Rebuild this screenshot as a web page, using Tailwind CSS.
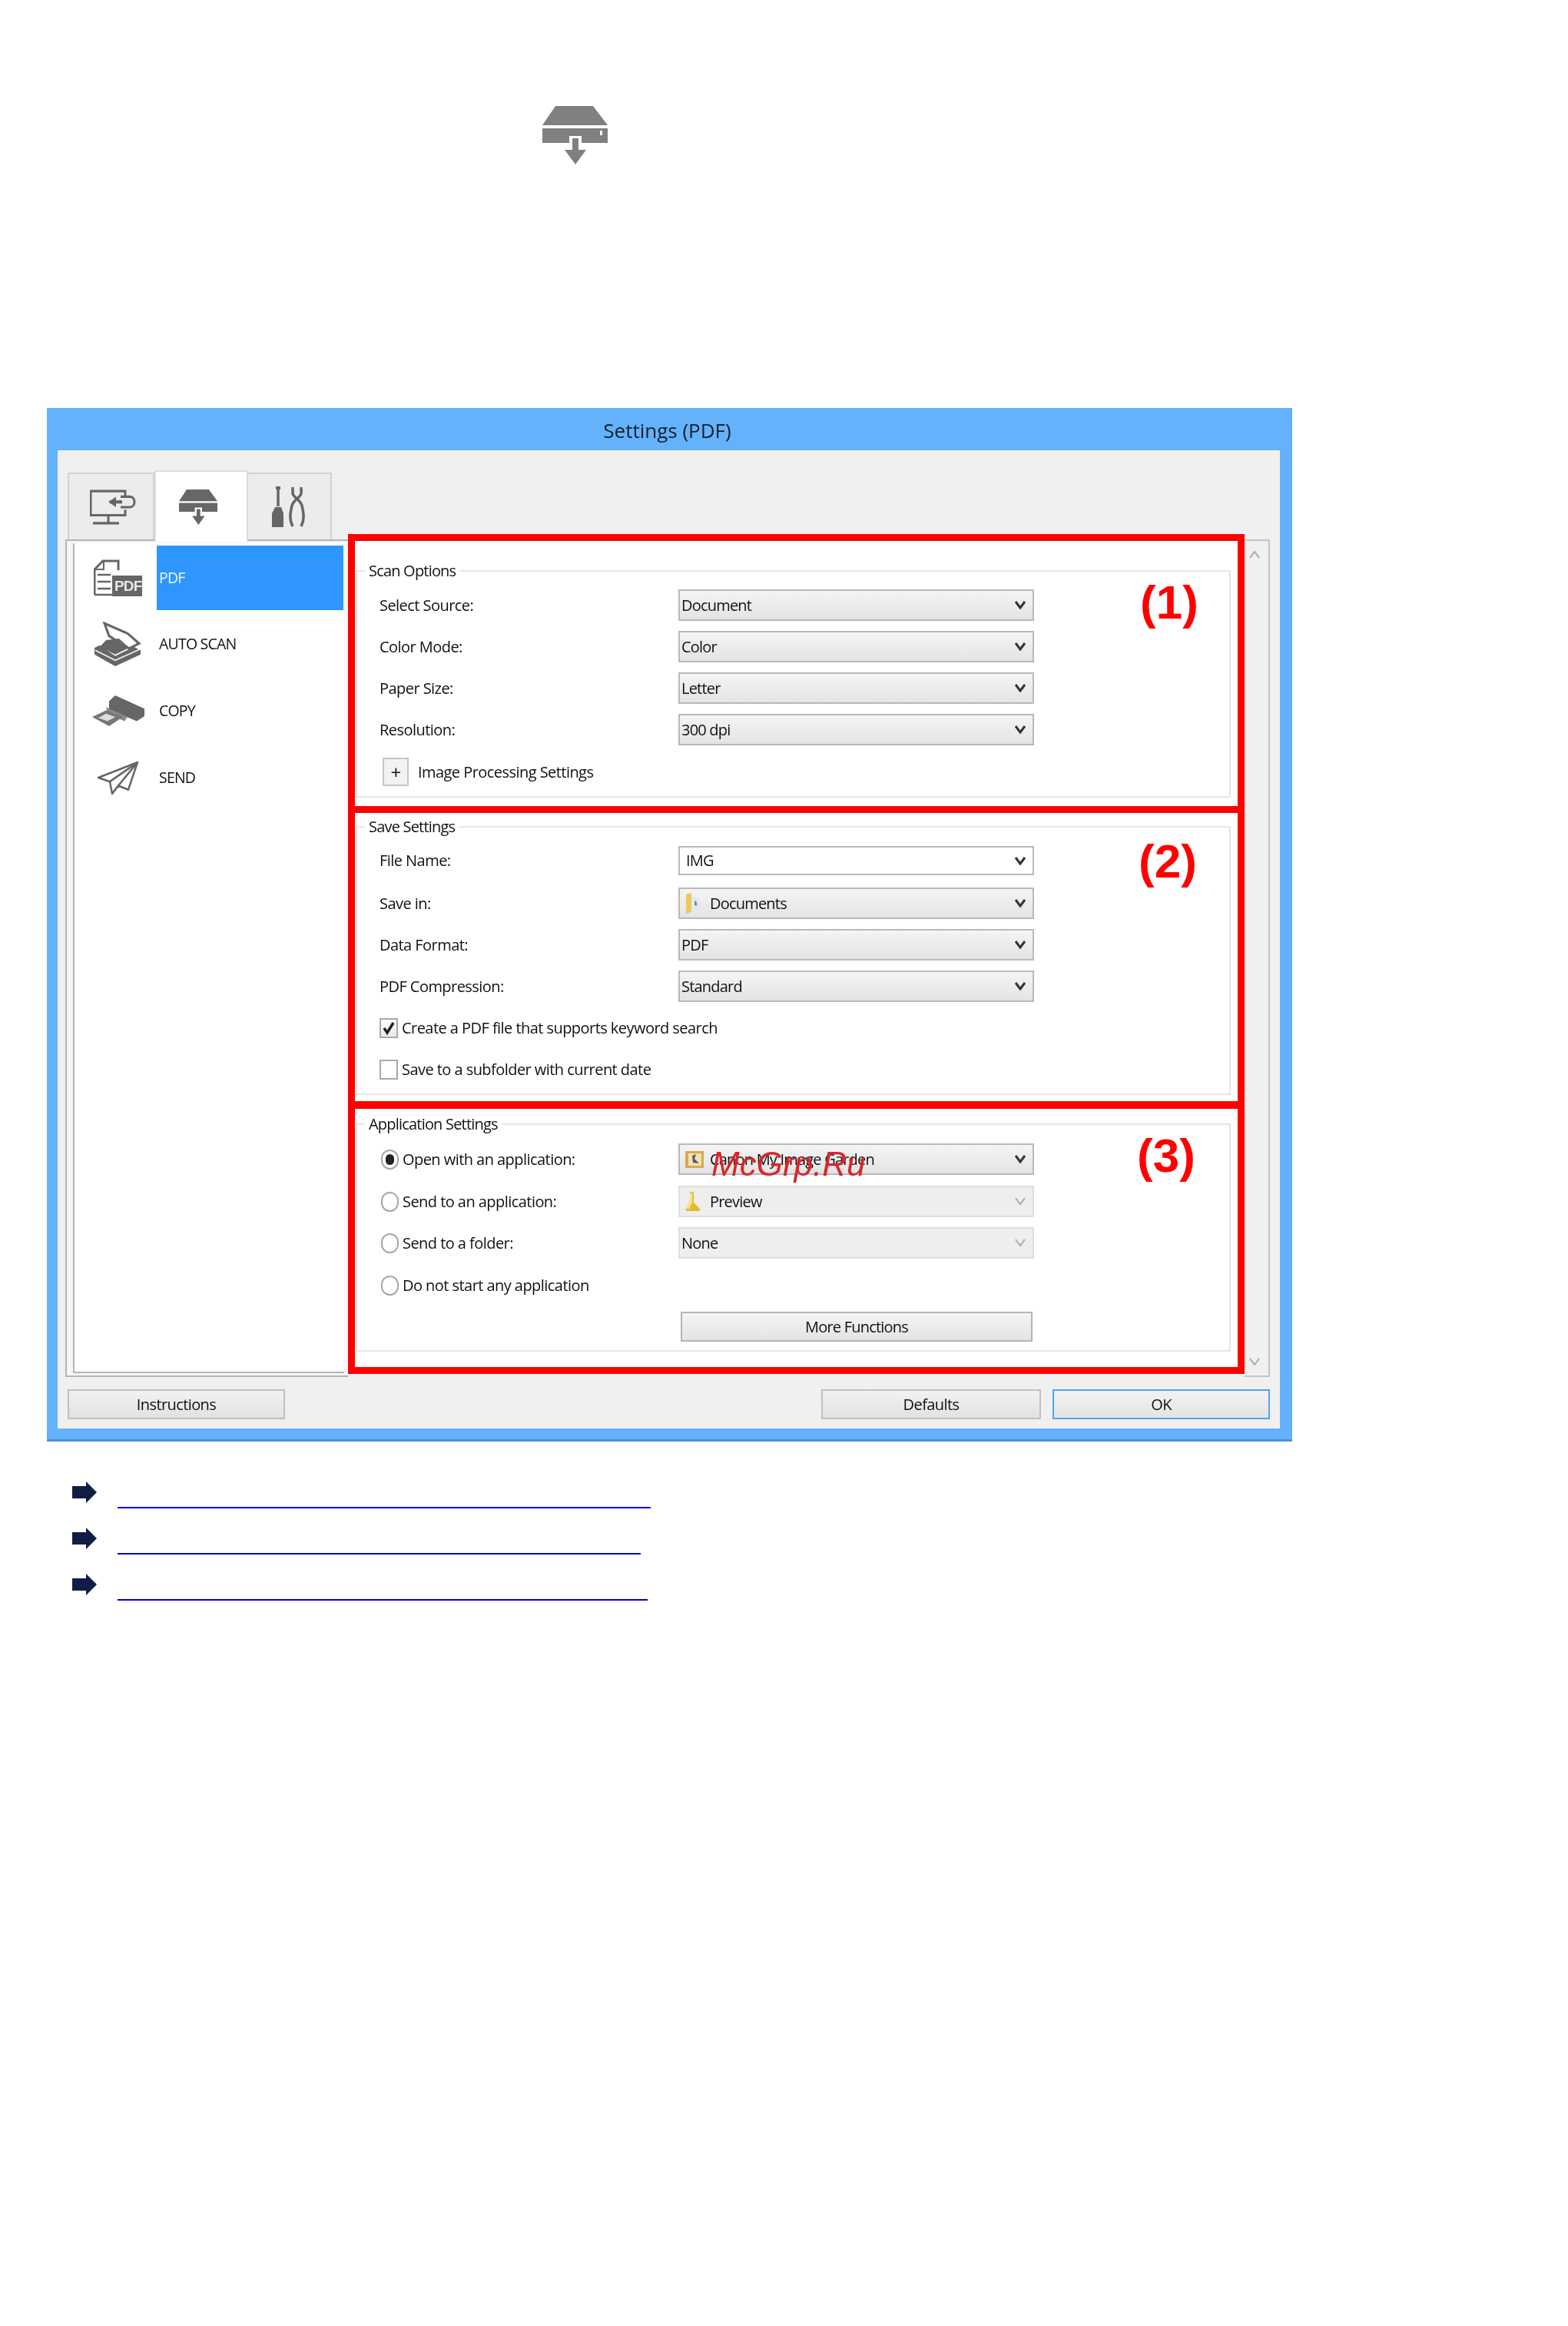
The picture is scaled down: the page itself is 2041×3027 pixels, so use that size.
<!DOCTYPE html>
<html lang="en">
<head>
  <meta charset="UTF-8">
  <title>Settings (PDF)</title>
  <script src="https://cdn.jsdelivr.net/npm/@tailwindcss/browser@4"></script>
</head>
<body class="bg-white font-['Open_Sans',sans-serif] text-[#111] min-h-[3027px]">

  <!-- Scan tab icon above the window -->
  <div class="pt-[138px] pl-[706px]">
    <svg class="block blur-[0.6px]" width="85" height="76" viewBox="0 0 85 76" fill="#808080">
      <path d="M17 0H66L85 25H0Z"/>
      <path d="M0 29H85V48H51V39H35V48H0Z"/>
      <path d="M39 42H47V57H57L43 76L29 57H39Z"/>
      <rect x="75" y="32" width="3" height="6" fill="#fff"/>
    </svg>
  </div>

  <!-- Settings window -->
  <div class="mt-[317px] ml-[61px] w-[1621px] h-[1345px] flex flex-col bg-[#64b2fc] border-b-[3px] border-[#4e93d2] blur-[0.7px]">
    <div class="h-[55px] shrink-0 flex items-center justify-center pt-[3px] pr-[6px] text-[26px] tracking-[0px] text-[#16202c]">Settings (PDF)</div>

    <div class="ml-[14px] w-[1591px] h-[1273px] shrink-0 bg-[#f0f0f0]">
      <!-- Tabs -->
      <div class="pt-[26px] pl-[13px] flex items-start h-[116px]">
        <div class="mt-[3px] w-[113px] h-[88px] pl-[5px] bg-[#ececec] border-2 border-b-0 border-[#d2d2d2] flex items-center justify-center">
          <svg width="60" height="46" viewBox="0 0 60 44" fill="none" stroke="#666" stroke-width="3" preserveAspectRatio="none">
            <path d="M46 9V2H1V32H46V25"/>
            <path d="M24 32V41M4 42H38"/>
            <path d="M40 9H52C60 9 60 22 52 22H40"/>
            <path d="M42 15.500H26" stroke-width="4"/>
            <path d="M34 9L24 15.500L34 22Z" fill="#666" stroke="none"/>
          </svg>
        </div>
        <div class="relative z-10 w-[122px] h-[93px] pr-[8px] bg-white border-2 border-b-0 border-[#dcdcdc] flex items-center justify-center">
          <svg width="50" height="46" viewBox="0 0 85 76" fill="#666" preserveAspectRatio="none">
            <path d="M17 0H66L85 25H0Z"/>
            <path d="M0 29H85V48H51V39H35V48H0Z"/>
            <path d="M39 42H47V57H57L43 76L29 57H39Z"/>
          </svg>
        </div>
        <div class="mt-[3px] w-[109px] h-[88px] pr-[4px] bg-[#ececec] border-2 border-b-0 border-l-0 border-[#d2d2d2] flex items-center justify-center">
          <svg width="44" height="54" viewBox="0 0 44 54" fill="none" stroke="#666">
            <path d="M9 2V26" stroke-width="3.500"/>
            <path d="M6 2H12" stroke-width="4"/>
            <path d="M5 27H13L16 35V53H1V35Z" fill="#666" stroke="none"/>
            <path d="M28 1V9C28 14 38 17 40 25C42 34 44 42 39 52" stroke-width="3.500"/>
            <path d="M39 1V9C39 14 29 17 27 25C25 34 23 42 28 52" stroke-width="3.500"/>
          </svg>
        </div>
      </div>

      <!-- Panel -->
      <div class="ml-[10px] w-[1568px] h-[1090px] flex relative">
        <!-- Function list -->
        <div class="w-[368px] h-full border-l-2 border-t-2 border-b-2 border-[#b4b4b4] pl-[8px] pr-[5px] pb-[3px] bg-[#f6f6f6]">
          <div class="mt-[3px] h-[1080px] bg-white border-l-2 border-b-2 border-[#b4b4b4] pt-[3px] text-[19.500px] tracking-[-0.8px]">
            <div class="h-[84px] flex">
              <div class="w-[107px] pl-[25px] flex items-center shrink-0">
                <svg width="64" height="48" viewBox="0 0 64 48" fill="none" stroke="#666" stroke-width="3">
                  <path d="M1 46V13L12 2H32V14"/>
                  <path d="M13 2V13H2" stroke-width="2"/>
                  <path d="M5 20H22M5 29H22M5 38H22M1 46H24" stroke-width="2.500"/>
                  <rect x="24" y="21" width="39" height="27" fill="#666" stroke="none"/>
                  <text x="27" y="41" fill="#e8e8e8" stroke="none" font-size="19" font-weight="700" font-family="Liberation Sans">PDF</text>
                </svg>
              </div>
              <div class="w-[243px] h-full bg-[#2f96ff] text-[#eef6ff] flex items-center pl-[3px]">PDF</div>
            </div>
            <div class="h-[87px] flex items-center">
              <div class="w-[107px] pl-[25px] shrink-0">
                <svg class="block" width="62" height="58" viewBox="0 0 62 53" preserveAspectRatio="none">
                  <path d="M14 2L44 14L59 26L46 32L20 17Z" fill="#fff" stroke="#666" stroke-width="3"/>
                  <path d="M16 22L33 20L46 31L28 39L8 30Z" fill="#666"/>
                  <path d="M1 31L8 28L28 41L52 30L61 34V39L28 53L1 39Z" fill="#666"/>
                  <path d="M2 34L28 46L60 33" fill="none" stroke="#f2f2f2" stroke-width="1.500"/>
                </svg>
              </div>
              <div class="pl-[3px]">AUTO SCAN</div>
            </div>
            <div class="h-[87px] flex items-center">
              <div class="w-[107px] pl-[23px] shrink-0">
                <svg class="block" width="68" height="40" viewBox="0 0 68 37" preserveAspectRatio="none">
                  <path d="M22 7L30 0L68 16V25L58 31L48 27L22 17Z" fill="#666"/>
                  <path d="M18 14L46 26L42 31L20 22Z" fill="#888"/>
                  <path d="M0 26L18 18L40 26L22 37Z" fill="#777"/>
                  <path d="M8 27L18 22L30 26L20 31Z" fill="#ddd"/>
                </svg>
              </div>
              <div class="pl-[3px]">COPY</div>
            </div>
            <div class="h-[87px] flex items-center">
              <div class="w-[107px] pl-[29px] shrink-0">
                <svg class="block mt-[3px]" width="55" height="44" viewBox="0 0 55 42" fill="none" stroke="#666" stroke-width="2.500" stroke-linejoin="round" preserveAspectRatio="none">
                  <path d="M53 1L2 20L17 25L20 40L28 30L41 35Z"/>
                  <path d="M53 1L17 25M53 1L28 30"/>
                </svg>
              </div>
              <div class="pl-[3px]">SEND</div>
            </div>
          </div>
        </div>

        <!-- Red framed settings -->
        <div class="relative z-20 w-[1167px] -mt-[7px] h-[1093px] bg-white text-[20px] tracking-[-0.55px]">

          <!-- (1) Scan Options -->
          <section class="h-[363px] border-[9px] border-[#ff0000] pt-[38px] pl-[1px]">
            <div class="relative w-[1139px] h-[296px] border-2 border-[#e6e6e6] pt-[23px] pl-[29px]">
              <div class="absolute left-[10px] -top-[15px] bg-white px-[5px] leading-[28px] tracking-[-0.8px]">Scan Options</div>
              <div class="absolute left-[1019px] top-[9px] text-[62px] font-bold leading-none text-[#ff0000] tracking-normal font-['Liberation_Sans',sans-serif]">(1)</div>
              <div class="flex items-center h-[41px] mb-[13px]">
                <div class="w-[389px]">Select Source:</div>
                <div class="w-[463px] h-[41px] pl-[2px] pr-[9px] flex items-center justify-between border-2 border-[#b9b9b9] tracking-[-0.8px] bg-linear-to-b from-[#f4f4f4] to-[#e4e4e4]">Document
                  <svg width="14" height="11" viewBox="0 0 14 11" fill="none" stroke="#333" stroke-width="3"><path d="M1 1L7 9L13 1"/></svg>
                </div>
              </div>
              <div class="flex items-center h-[41px] mb-[13px]">
                <div class="w-[389px]">Color Mode:</div>
                <div class="w-[463px] h-[41px] pl-[2px] pr-[9px] flex items-center justify-between border-2 border-[#b9b9b9] tracking-[-0.8px] bg-linear-to-b from-[#f4f4f4] to-[#e4e4e4]">Color
                  <svg width="14" height="11" viewBox="0 0 14 11" fill="none" stroke="#333" stroke-width="3"><path d="M1 1L7 9L13 1"/></svg>
                </div>
              </div>
              <div class="flex items-center h-[41px] mb-[13px]">
                <div class="w-[389px]">Paper Size:</div>
                <div class="w-[463px] h-[41px] pl-[2px] pr-[9px] flex items-center justify-between border-2 border-[#b9b9b9] tracking-[-0.8px] bg-linear-to-b from-[#f4f4f4] to-[#e4e4e4]">Letter
                  <svg width="14" height="11" viewBox="0 0 14 11" fill="none" stroke="#333" stroke-width="3"><path d="M1 1L7 9L13 1"/></svg>
                </div>
              </div>
              <div class="flex items-center h-[41px] mb-[16px]">
                <div class="w-[389px]">Resolution:</div>
                <div class="w-[463px] h-[41px] pl-[2px] pr-[9px] flex items-center justify-between border-2 border-[#b9b9b9] tracking-[-0.8px] bg-linear-to-b from-[#f4f4f4] to-[#e4e4e4]">300 dpi
                  <svg width="14" height="11" viewBox="0 0 14 11" fill="none" stroke="#333" stroke-width="3"><path d="M1 1L7 9L13 1"/></svg>
                </div>
              </div>
              <div class="flex items-center h-[37px] pl-[4px]">
                <div class="w-[34px] h-[37px] mr-[12px] flex items-center justify-center border-2 border-[#c6c6c6] bg-[#f2f2f2] text-[#111] text-[24px] leading-none">+</div>
                <div>Image Processing Settings</div>
              </div>
            </div>
          </section>

          <!-- (2) Save Settings -->
          <section class="h-[385px] border-x-[9px] border-b-[10px] border-[#ff0000] pt-[17px] pl-[1px]">
            <div class="relative w-[1139px] h-[350px] border-2 border-[#e6e6e6] pt-[24px] pl-[29px]">
              <div class="absolute left-[10px] -top-[15px] bg-white px-[5px] leading-[28px] tracking-[-0.8px]">Save Settings</div>
              <div class="absolute left-[1017px] top-[13px] text-[62px] font-bold leading-none text-[#ff0000] tracking-normal font-['Liberation_Sans',sans-serif]">(2)</div>
              <div class="flex items-center h-[38px] mb-[16px]">
                <div class="w-[389px]">File Name:</div>
                <div class="w-[463px] h-[38px] pl-[8px] pr-[9px] flex items-center justify-between border-2 border-[#b9b9b9] tracking-[-0.8px] bg-white">IMG
                  <svg width="14" height="11" viewBox="0 0 14 11" fill="none" stroke="#333" stroke-width="3"><path d="M1 1L7 9L13 1"/></svg>
                </div>
              </div>
              <div class="flex items-center h-[41px] mb-[13px]">
                <div class="w-[389px]">Save in:</div>
                <div class="w-[463px] h-[41px] pl-[7px] pr-[9px] flex items-center border-2 border-[#b9b9b9] tracking-[-0.8px] bg-linear-to-b from-[#f4f4f4] to-[#e4e4e4]">
                  <svg class="mr-[11px]" width="21" height="27" viewBox="0 0 21 27"><path d="M1 2L8 0V25L1 27Z" fill="#ecc95a"/><path d="M8 4L20 8V26L8 25Z" fill="#e4e8f0"/><path d="M12 10L15 12V17L12 16Z" fill="#6d86b8"/></svg>
                  Documents
                  <svg class="ml-auto" width="14" height="11" viewBox="0 0 14 11" fill="none" stroke="#333" stroke-width="3"><path d="M1 1L7 9L13 1"/></svg>
                </div>
              </div>
              <div class="flex items-center h-[41px] mb-[13px]">
                <div class="w-[389px]">Data Format:</div>
                <div class="w-[463px] h-[41px] pl-[2px] pr-[9px] flex items-center justify-between border-2 border-[#b9b9b9] tracking-[-0.8px] bg-linear-to-b from-[#f4f4f4] to-[#e4e4e4]">PDF
                  <svg width="14" height="11" viewBox="0 0 14 11" fill="none" stroke="#333" stroke-width="3"><path d="M1 1L7 9L13 1"/></svg>
                </div>
              </div>
              <div class="flex items-center h-[41px] mb-[21px]">
                <div class="w-[389px]">PDF Compression:</div>
                <div class="w-[463px] h-[41px] pl-[2px] pr-[9px] flex items-center justify-between border-2 border-[#b9b9b9] tracking-[-0.8px] bg-linear-to-b from-[#f4f4f4] to-[#e4e4e4]">Standard
                  <svg width="14" height="11" viewBox="0 0 14 11" fill="none" stroke="#333" stroke-width="3"><path d="M1 1L7 9L13 1"/></svg>
                </div>
              </div>
              <div class="flex items-center h-[26px] mb-[28px]">
                <div class="w-[24px] h-[26px] mr-[5px] border-2 border-[#a8a8a8] bg-linear-to-b from-[#fff] to-[#e8e8e8] flex items-center justify-center">
                  <svg width="16" height="18" viewBox="0 0 16 18" fill="none" stroke="#222" stroke-width="3.500"><path d="M2 9L6 15L14 2"/></svg>
                </div>
                <div>Create a PDF file that supports keyword search</div>
              </div>
              <div class="flex items-center h-[26px]">
                <div class="w-[24px] h-[26px] mr-[5px] border-2 border-[#a8a8a8] bg-white"></div>
                <div>Save to a subfolder with current date</div>
              </div>
            </div>
          </section>

          <!-- (3) Application Settings -->
          <section class="h-[345px] border-x-[9px] border-b-[9px] border-[#ff0000] pt-[19px] pl-[1px]">
            <div class="relative w-[1139px] h-[297px] border-2 border-[#e6e6e6] pt-[24px] pl-[31px]">
              <div class="absolute left-[10px] -top-[15px] bg-white px-[5px] leading-[28px] tracking-[-0.8px]">Application Settings</div>
              <div class="absolute left-[1015px] top-[9px] text-[62px] font-bold leading-none text-[#ff0000] tracking-normal font-['Liberation_Sans',sans-serif]">(3)</div>
              <div class="flex items-center h-[41px] mb-[14px]">
                <div class="w-[23px] h-[26px] mr-[5px] rounded-full border-2 border-[#a8a8a8] bg-white flex items-center justify-center"><div class="w-[11px] h-[14px] rounded-full bg-[#222]"></div></div>
                <div class="w-[359px]">Open with an application:</div>
                <div class="relative w-[463px] h-[41px] pl-[7px] pr-[9px] flex items-center border-2 border-[#b9b9b9] tracking-[-0.8px] bg-linear-to-b from-[#f4f4f4] to-[#e4e4e4]">
                  <svg class="mr-[8px]" width="24" height="22" viewBox="0 0 24 22"><rect width="24" height="22" fill="#d9a94e"/><rect x="4" y="3" width="17" height="16" fill="#f1e2b5"/><path d="M9 6L14 4L12 10L18 16L10 15Z" fill="#5a5a5a"/></svg>
                  Canon My Image Garden
                  <svg class="ml-auto" width="14" height="11" viewBox="0 0 14 11" fill="none" stroke="#333" stroke-width="3"><path d="M1 1L7 9L13 1"/></svg>
                  <div class="absolute left-[41px] top-[3px] text-[44px] italic leading-[44px] tracking-normal text-[#d8262c] font-['Liberation_Sans',sans-serif]">McGrp.Ru</div>
                </div>
              </div>
              <div class="flex items-center h-[41px] mb-[13px]">
                <div class="w-[23px] h-[26px] mr-[5px] rounded-full border-2 border-[#a8a8a8] bg-white"></div>
                <div class="w-[359px]">Send to an application:</div>
                <div class="w-[463px] h-[41px] pl-[7px] pr-[9px] flex items-center border-2 border-[#dedede] tracking-[-0.8px] bg-[#eeeeee]">
                  <svg class="mr-[12px]" width="20" height="25" viewBox="0 0 20 25"><path d="M6 0H11V14L19 22V25H1V22L6 14Z" fill="#e8b92f"/><path d="M7 1H9V14L5 22H2Z" fill="#f7e69a"/></svg>
                  Preview
                  <svg class="ml-auto" width="14" height="11" viewBox="0 0 14 11" fill="none" stroke="#aaa" stroke-width="2"><path d="M1 1L7 9L13 1"/></svg>
                </div>
              </div>
              <div class="flex items-center h-[41px] mb-[22px]">
                <div class="w-[23px] h-[26px] mr-[5px] rounded-full border-2 border-[#a8a8a8] bg-white"></div>
                <div class="w-[359px]">Send to a folder:</div>
                <div class="w-[463px] h-[41px] pl-[2px] pr-[9px] flex items-center justify-between border-2 border-[#dedede] tracking-[-0.8px] bg-[#eeeeee]">None
                  <svg width="14" height="11" viewBox="0 0 14 11" fill="none" stroke="#aaa" stroke-width="2"><path d="M1 1L7 9L13 1"/></svg>
                </div>
              </div>
              <div class="flex items-center h-[26px] mb-[21px]">
                <div class="w-[23px] h-[26px] mr-[5px] rounded-full border-2 border-[#a8a8a8] bg-white"></div>
                <div>Do not start any application</div>
              </div>
              <div class="ml-[390px] w-[458px] h-[39px] flex items-center justify-center border-2 border-[#b4b4b4] tracking-[-0.8px] bg-linear-to-b from-[#f4f4f4] to-[#e4e4e4]">More Functions</div>
            </div>
          </section>
        </div>

        <!-- Scroll bar -->
        <div class="w-[33px] h-[1090px] border-t-2 border-r-2 border-b-2 border-[#c4c4c4] flex flex-col items-center justify-between py-[13px] pr-[6px]">
          <svg width="14" height="10" viewBox="0 0 14 10" fill="none" stroke="#aaa" stroke-width="2"><path d="M1 9L7 1L13 9"/></svg>
          <svg width="14" height="10" viewBox="0 0 14 10" fill="none" stroke="#aaa" stroke-width="2"><path d="M1 1L7 9L13 1"/></svg>
        </div>
      </div>

      <!-- Footer buttons -->
      <div class="mt-[16px] pl-[13px] flex text-[20px] tracking-[-0.6px]">
        <div class="w-[283px] h-[39px] flex items-center justify-center border-2 border-[#c0c0c0] bg-linear-to-b from-[#f2f2f2] to-[#e2e2e2]">Instructions</div>
        <div class="ml-[698px] w-[286px] h-[39px] flex items-center justify-center border-2 border-[#c0c0c0] bg-linear-to-b from-[#f2f2f2] to-[#e2e2e2]">Defaults</div>
        <div class="ml-[15px] w-[283px] h-[39px] flex items-center justify-center border-2 border-[#4fa6f5] bg-linear-to-b from-[#f2f2f2] to-[#e4e4e4]">OK</div>
      </div>
    </div>
  </div>

  <!-- Links -->
  <div class="mt-[52px] ml-[94px] flex flex-col gap-[32px]">
    <div class="flex h-[28px]">
      <svg class="blur-[0.5px]" width="32" height="28" viewBox="0 0 32 28" fill="#111d45"><path d="M0 6H18V0L32 14L18 28V22H0Z"/></svg>
      <a href="#" class="ml-[27px] block w-[694px] h-[35px] border-b-2 border-[#0000cc]"></a>
    </div>
    <div class="flex h-[28px]">
      <svg class="blur-[0.5px]" width="32" height="28" viewBox="0 0 32 28" fill="#111d45"><path d="M0 6H18V0L32 14L18 28V22H0Z"/></svg>
      <a href="#" class="ml-[27px] block w-[681px] h-[35px] border-b-2 border-[#0000cc]"></a>
    </div>
    <div class="flex h-[28px]">
      <svg class="blur-[0.5px]" width="32" height="28" viewBox="0 0 32 28" fill="#111d45"><path d="M0 6H18V0L32 14L18 28V22H0Z"/></svg>
      <a href="#" class="ml-[27px] block w-[690px] h-[35px] border-b-2 border-[#0000cc]"></a>
    </div>
  </div>
</body>
</html>
